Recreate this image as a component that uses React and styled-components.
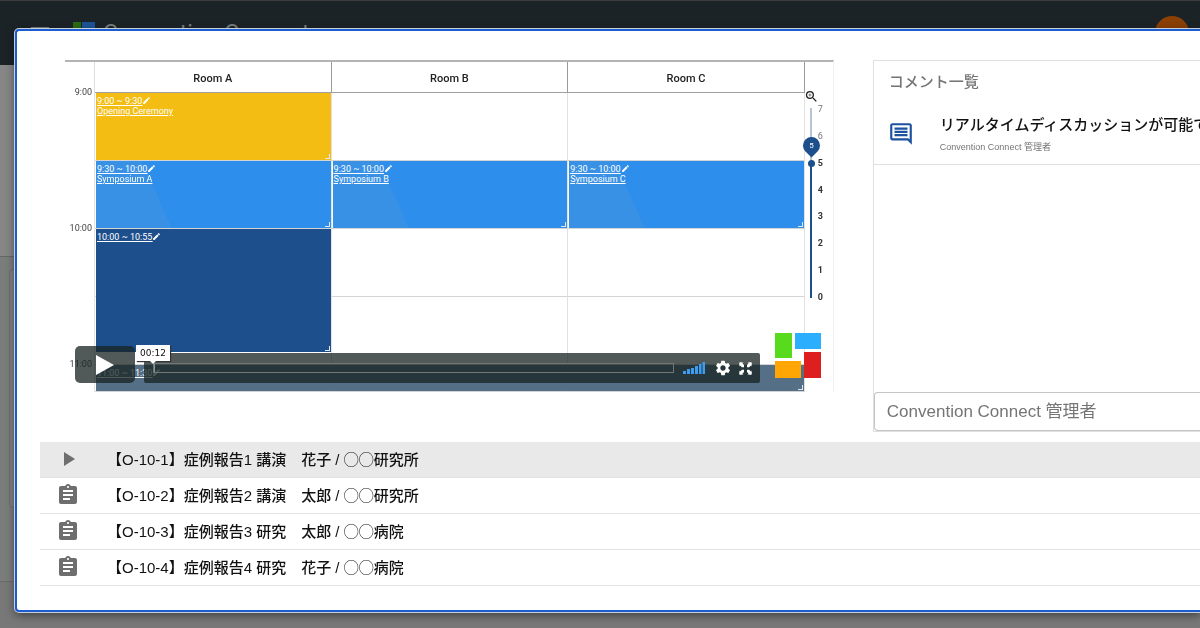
import React, { useState } from 'react';
import styled, { createGlobalStyle } from 'styled-components'
import { MdAssignment, MdCreate, MdMenu, MdOutlineComment, MdPlayArrow, MdSettings, MdZoomIn } from 'react-icons/md'


const GlobalStyle = createGlobalStyle`
  * {
    box-sizing: border-box;
  }
  body {
    margin: 0;
    overflow: hidden;
    font-family: "Liberation Sans", "Noto Sans CJK JP", sans-serif;
  }
  button, input {
    font-family: inherit;
    margin: 0;
    padding: 0;
  }
`

const Page = styled.div`
  display: flex;
  flex-direction: column;
  min-height: 100vh;
  background: #7b7d7c;
`

const Header = styled.header`
  display: flex;
  align-items: center;
  height: 65px;
  padding: 0 11px 0 28px;
  background: #1c2326;
  border-top: 1px solid #3c3c3c;
  color: #787d7e;
`

const MenuButton = styled.button`
  display: flex;
  border: none;
  background: none;
  color: inherit;
  font-size: 24px;
`

const Brand = styled.a`
  display: flex;
  align-items: center;
  gap: 7px;
  margin: 0 auto 0 20px;
  padding-top: 1px;
  color: inherit;
  font-family: Roboto, sans-serif;
  font-size: 23px;
  text-decoration: none;
`

const Avatar = styled.div`
  width: 34px;
  height: 34px;
  border-radius: 50%;
  background: #8a3f05;
`

const SubBar = styled.div`
  height: 192px;
  background: #868686;
  border-bottom: 1px solid #666;
`

const BackCard = styled.div`
  flex: 1;
  margin: 12px 9px 73px;
  border: 1px solid #6e6e6e;
  border-radius: 4px;
  background: #808080;
`

const BackFooter = styled.footer`
  height: 47px;
  background: #787878;
  border-top: 1px solid #6a6a6a;
`

const Overlay = styled.div`
  position: fixed;
  inset: 0;
  display: flex;
  flex-direction: column;
  padding: 29px 0 17px 15px;
`

const Dialog = styled.section`
  flex: 1;
  display: flex;
  flex-direction: column;
  gap: 10px;
  padding: 29px 0 24px 23px;
  border: 2px solid #1d5bd0;
  border-right: none;
  border-radius: 4px 0 0 4px;
  background: #fff;
  box-shadow: 0 0 0 1px #c5d0d8, 0 3px 10px rgba(0, 0, 0, 0.5);
`

const Top = styled.div`
  display: grid;
  grid-template-columns: minmax(0, 47fr) minmax(0, 20fr);
  align-items: start;
  gap: 39px;
  padding-left: 25px;
`

// ---- video ----

const Video = styled.div`
  position: relative;
  overflow: hidden;
  border-top: 2px solid #b4b4b4;
  border-right: 1px solid #f0f0f0;
  font-family: Roboto, sans-serif;
`

const Calendar = styled.div`
  display: grid;
  grid-template-columns: 30px repeat(3, minmax(0, 1fr)) 28px;
  grid-template-rows: 31px repeat(4, 68px) 27px;
`

const Room = styled.div`
  grid-row: 1;
  display: flex;
  align-items: center;
  justify-content: center;
  padding-top: 3px;
  border-right: 1px solid #999;
  border-bottom: 1px solid #a0a0a0;
  color: #222;
  font-size: 11px;
  font-weight: 500;
`

const Cell = styled.div`
  grid-column: ${props => props.$col};
  grid-row: ${props => props.$row};
  border-right: 1px solid #e2e2e2;
  border-bottom: 1px solid ${props => props.$col === 1 ? 'transparent' : '#d4d4d4'};
`

const Hour = styled.div`
  grid-column: 1;
  grid-row: ${props => props.$row};
  height: 12px;
  margin-top: -7px;
  padding-right: 3px;
  color: #444;
  font-size: 9px;
  line-height: 12px;
  text-align: right;
`

const Corner = styled.div`
  grid-column: 1;
  grid-row: 1;
  border-right: 1px solid #ddd;
`

const Event = styled.a`
  position: relative;
  grid-column: ${props => props.$col};
  grid-row: ${props => props.$row};
  margin: 0 1px ${props => props.$short ? '13px' : '1px'} 1px;
  padding: 3px 1px;
  background: ${props => props.$color};
  color: #fff;
  font-size: 9px;
  line-height: 10px;
  &::after {
    content: "";
    position: absolute;
    right: 1px;
    bottom: 1px;
    width: 4px;
    height: 4px;
    border-right: 1px solid #dfe9f2;
    border-bottom: 1px solid #dfe9f2;
  }
`

const EventTime = styled.div`
  display: flex;
  text-decoration: underline;
`

const Zoom = styled.div`
  grid-column: 5;
  grid-row: 2 / 6;
  display: flex;
  flex-direction: column;
  align-items: flex-start;
  margin-top: -4px;
  margin-left: -1px;
  color: #222;
`

const ZoomScale = styled.div`
  position: relative;
  display: flex;
  margin-left: 4px;
  height: 198px;
`

const ZoomRange = styled.input`
  appearance: none;
  writing-mode: vertical-lr;
  direction: rtl;
  width: 7px;
  height: 190px;
  margin: 4px 0;
  background: linear-gradient(#b9c4d3 28%, #1c4f8c 28%) center / 2px 100% no-repeat;
  &::-webkit-slider-thumb {
    appearance: none;
    width: 7px;
    height: 7px;
    border-radius: 50%;
    background: #1c4f8c;
  }
`

const ZoomMarks = styled.div`
  display: flex;
  flex-direction: column;
  justify-content: space-between;
  margin-left: 3px;
  font-size: 9px;
  line-height: 10px;
`

const ZoomMark = styled.span`
  color: ${props => props.$on ? '#333' : '#777'};
  font-weight: ${props => props.$on ? 700 : 400};
`

const ZoomPin = styled.div`
  position: absolute;
  top: 33px;
  left: -5px;
  width: 17px;
  height: 17px;
  border-radius: 50% 50% 0 50%;
  background: #1c4f8c;
  transform: rotate(45deg);
  span {
    display: block;
    color: #fff;
    font-size: 8px;
    line-height: 17px;
    text-align: center;
    transform: rotate(-45deg);
  }
`

const Controls = styled.div`
  position: absolute;
  left: 10px;
  right: 73px;
  bottom: 9px;
  display: flex;
  align-items: flex-end;
  gap: 9px;
`

const PlayButton = styled.button`
  display: flex;
  align-items: center;
  justify-content: center;
  width: 60px;
  height: 37px;
  border: none;
  border-radius: 5px;
  background: rgba(23, 35, 34, 0.75);
`

const ControlBar = styled.div`
  position: relative;
  flex: 1;
  display: flex;
  align-items: center;
  gap: 9px;
  height: 30px;
  padding: 0 6px 0 9px;
  border-radius: 2px;
  background: rgba(23, 35, 34, 0.75);
  color: #fff;
`

const Seek = styled.input`
  appearance: none;
  flex: 1;
  min-width: 0;
  height: 10px;
  border: 1px solid #6f7877;
  background: transparent;
  &::-webkit-slider-thumb {
    appearance: none;
    width: 1px;
    height: 8px;
    background: #8d9695;
  }
`

const IconButton = styled.button`
  display: flex;
  border: none;
  background: none;
  color: #fff;
  font-size: 18px;
  & + & {
    margin-left: -4px;
  }
`

const TimeTip = styled.div`
  position: absolute;
  left: -8px;
  top: -8px;
  padding: 0 4px;
  background: #fff;
  box-shadow: 1px 1px 1px #333;
  color: #111;
  font-family: "DejaVu Sans", sans-serif;
  font-size: 9px;
  line-height: 16px;
  &::after {
    content: "";
    position: absolute;
    left: 13px;
    top: 15px;
    border: 4px solid transparent;
    border-top-color: #fff;
  }
`

const Watermark = styled.svg`
  position: absolute;
  right: 12px;
  bottom: 14px;
`

// ---- comments ----

const Comments = styled.aside`
  display: flex;
  flex-direction: column;
  height: 372px;
  border: 1px solid #e0e0e0;
  border-right: none;
  overflow: hidden;
`

const CommentsTitle = styled.h2`
  margin: 0;
  padding: 10px 15px;
  color: #757575;
  font-size: 15px;
  font-weight: 500;
  line-height: 22px;
`

const Comment = styled.article`
  display: flex;
  align-items: center;
  gap: 26px;
  height: 62px;
  padding-left: 14px;
  border-bottom: 1px solid #e0e0e0;
  color: #1c52a0;
  font-size: 26px;
  svg {
    flex: none;
  }
`

const CommentText = styled.p`
  margin: 0;
  color: #111;
  font-size: 15px;
  font-weight: 500;
  line-height: 22px;
  white-space: nowrap;
`

const CommentAuthor = styled.p`
  margin: 4px 0 0;
  color: #757575;
  font-size: 9px;
  line-height: 14px;
`

const CommentInput = styled.input`
  width: 100%;
  height: 39px;
  margin-top: auto;
  padding: 0 12px;
  border: 1px solid #c4c4c4;
  border-right: none;
  border-radius: 4px 0 0 4px;
  color: #333;
  font-size: 17px;
  &::placeholder {
    color: #757575;
    opacity: 1;
  }
`

// ---- presentations ----

const List = styled.ul`
  margin: 0;
  padding: 0;
  list-style: none;
`

const Row = styled.button`
  display: flex;
  align-items: center;
  gap: 27px;
  width: 100%;
  height: 36px;
  padding: 0 0 2px 16px;
  border: none;
  border-bottom: 1px solid #e2e2e2;
  background: ${props => props.$active ? '#e9e9e9' : '#fff'};
  color: #111;
  font-size: 15px;
  font-weight: 500;
  text-align: left;
  white-space: pre;
  svg {
    color: #6e6e6e;
    font-size: 24px;
  }
`

const symposium = 'linear-gradient(66deg, #3991e5 69px, #2e8eec 69px)'

const events = [
  { time: '9:00 ~ 9:30', title: 'Opening Ceremony', col: 2, row: '2', color: '#f3bd13' },
  { time: '9:30 ~ 10:00', title: 'Symposium A', col: 2, row: '3', color: symposium },
  { time: '9:30 ~ 10:00', title: 'Symposium B', col: 3, row: '3', color: symposium },
  { time: '9:30 ~ 10:00', title: 'Symposium C', col: 4, row: '3', color: symposium },
  { time: '10:00 ~ 10:55', col: 2, row: '4 / 6', color: '#1c4f8c', short: true },
  { time: '11:00 ~ 11:30', col: '2 / 5', row: '6', color: '#557086' },
]

const talks = [
  '【O-10-1】症例報告1 講演　花子 / ◯◯研究所',
  '【O-10-2】症例報告2 講演　太郎 / ◯◯研究所',
  '【O-10-3】症例報告3 研究　太郎 / ◯◯病院',
  '【O-10-4】症例報告4 研究　花子 / ◯◯病院',
]

const VideoPlayer = () => {
  const [zoom, setZoom] = useState(5)
  const [time, setTime] = useState(0)

  return (
    <Video>
      <Calendar>
        <Corner />
        {['Room A', 'Room B', 'Room C'].map(room => <Room key={room}>{room}</Room>)}
        {[2, 3, 4, 5, 6].map(row => [1, 2, 3, 4].map(col => (
          <Cell key={`${row}-${col}`} $row={row} $col={col} />
        )))}
        <Hour $row={2}>9:00</Hour>
        <Hour $row={4}>10:00</Hour>
        <Hour $row={6}>11:00</Hour>
        {events.map(e => (
          <Event key={e.time + e.title} href="#event" $col={e.col} $row={e.row} $color={e.color} $short={e.short}>
            <EventTime>{e.time}<MdCreate size={9} /></EventTime>
            {e.title}
          </Event>
        ))}
        <Zoom>
          <MdZoomIn size={15} />
          <ZoomScale>
            <ZoomRange type="range" aria-label="Zoom" min="0" max="7" value={zoom} onChange={e => setZoom(Number(e.target.value))} />
            <ZoomMarks>
              {[7, 6, 5, 4, 3, 2, 1, 0].map(n => <ZoomMark key={n} $on={n <= zoom}>{n}</ZoomMark>)}
            </ZoomMarks>
            <ZoomPin><span>{zoom}</span></ZoomPin>
          </ZoomScale>
        </Zoom>
      </Calendar>
      <Controls>
        <PlayButton aria-label="Play">
          <svg width="18" height="20" viewBox="0 0 18 20" fill="#fff"><path d="M0 0l18 10L0 20z" /></svg>
        </PlayButton>
        <ControlBar>
          <Seek type="range" aria-label="Seek" min="0" max="100" value={time} onChange={e => setTime(Number(e.target.value))} />
          <svg width="22" height="12" viewBox="0 0 22 12" fill="#3b9cf0">
            <path d="M0 9h3v3H0zM4 7h3v5H4zM8 6h3v6H8zM12 4h3v8h-3zM16 2h2.500v10H16zM19.500 0H22v12h-2.500z" />
          </svg>
          <IconButton aria-label="Settings"><MdSettings /></IconButton>
          <IconButton aria-label="Fullscreen">
            <svg width="17" height="17" viewBox="0 0 17 17" fill="#fff">
              <path d="M2.500 2.500h2L7 5v2.200H4.800L2.500 4.800zM14.500 2.500h-2L10 5v2.200h2.200l2.300-2.400zM2.500 14.500h2L7 12V9.800H4.800l-2.300 2.400zM14.500 14.500h-2L10 12V9.800h2.200l2.300 2.400z" />
              <path d="M2.500 2.500h4l-4 4zM14.500 2.500v4l-4-4zM2.500 14.500v-4l4 4zM14.500 14.500h-4l4-4z" />
            </svg>
          </IconButton>
          <TimeTip>00:12</TimeTip>
        </ControlBar>
      </Controls>
      <Watermark width="46" height="46" viewBox="0 0 46 46">
        <path fill="#57db1c" d="M0 1h17v25H0z" />
        <path fill="#2caeff" d="M20 1h26v16H20z" />
        <path fill="#ffa604" d="M0 29h26v17H0z" />
        <path fill="#dd1f20" d="M29 20h17v26H29z" />
      </Watermark>
    </Video>
  )
}

const App = () => {
  const [active, setActive] = useState(0)

  return (
    <>
      <GlobalStyle />
      <Page>
        <Header>
          <MenuButton aria-label="Menu"><MdMenu /></MenuButton>
          <Brand href="/">
            <svg width="24" height="24" viewBox="0 0 24 24">
              <path fill="#2b6a10" d="M1 0h8v13H1z" />
              <path fill="#1b5496" d="M10 0h13v8H10z" />
              <path fill="#80530a" d="M1 15h13v8H1z" />
              <path fill="#701214" d="M15 10h8v13h-8z" />
            </svg>
            Convention Connect
          </Brand>
          <Avatar />
        </Header>
        <SubBar />
        <BackCard />
        <BackFooter />
      </Page>
      <Overlay>
        <Dialog role="dialog" aria-label="Session">
          <Top>
            <VideoPlayer />
            <Comments>
              <CommentsTitle>コメント一覧</CommentsTitle>
              <Comment>
                <MdOutlineComment />
                <div>
                  <CommentText>リアルタイムディスカッションが可能で</CommentText>
                  <CommentAuthor>Convention Connect 管理者</CommentAuthor>
                </div>
              </Comment>
              <CommentInput aria-label="Comment" placeholder="Convention Connect 管理者" />
            </Comments>
          </Top>
          <List>
            {talks.map((talk, i) => (
              <li key={talk}>
                <Row $active={i === active} onClick={() => setActive(i)}>
                  {i === active ? <MdPlayArrow /> : <MdAssignment />}
                  {talk}
                </Row>
              </li>
            ))}
          </List>
        </Dialog>
      </Overlay>
    </>
  );
};

export default App;
